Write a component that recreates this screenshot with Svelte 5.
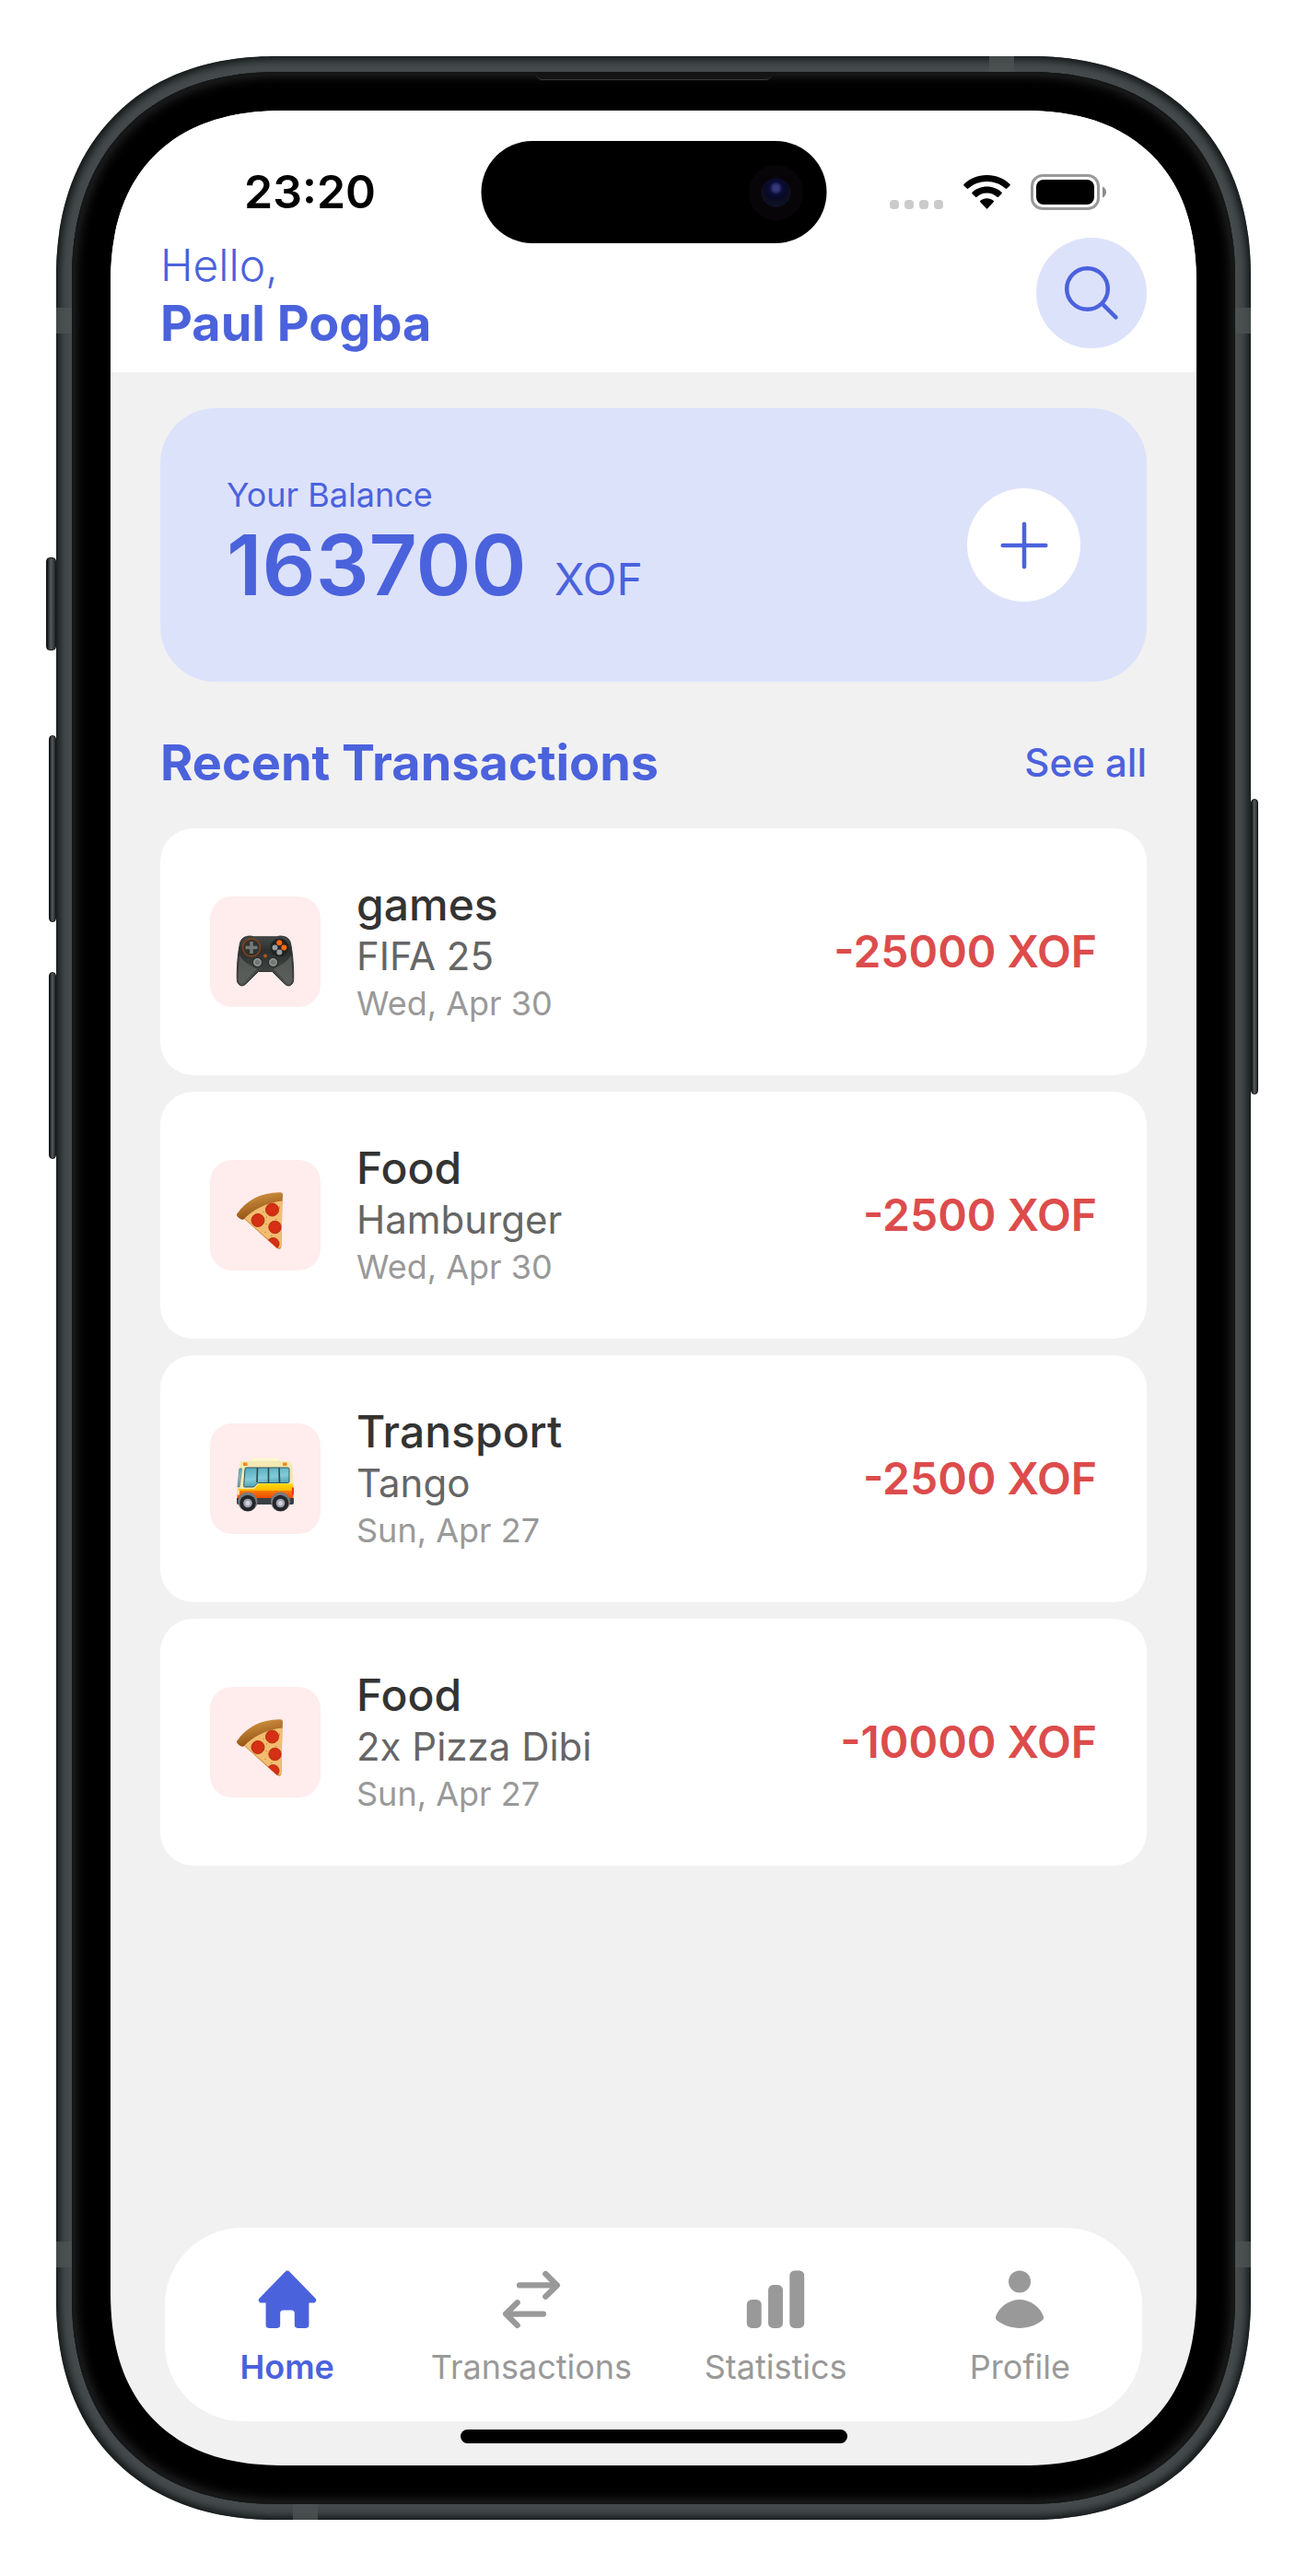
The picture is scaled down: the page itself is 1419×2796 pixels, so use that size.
<script>
  const transactions = [
    { icon: 'gamepad', category: 'games', note: 'FIFA 25', date: 'Wed, Apr 30', amount: '-25000 XOF' },
    { icon: 'pizza', category: 'Food', note: 'Hamburger', date: 'Wed, Apr 30', amount: '-2500 XOF' },
    { icon: 'bus', category: 'Transport', note: 'Tango', date: 'Sun, Apr 27', amount: '-2500 XOF' },
    { icon: 'pizza', category: 'Food', note: '2x Pizza Dibi', date: 'Sun, Apr 27', amount: '-10000 XOF' },
  ];
  const tabs = [
    { id: 'home', label: 'Home' },
    { id: 'transactions', label: 'Transactions' },
    { id: 'statistics', label: 'Statistics' },
    { id: 'profile', label: 'Profile' },
  ];
  let active = $state('home');
</script>

<div class="stage">
  <div class="phone">
    <i class="key mute"></i>
    <i class="key up"></i>
    <i class="key down"></i>
    <i class="key power"></i>
    <i class="band lt"></i>
    <i class="band lb"></i>
    <i class="band rt"></i>
    <i class="band rb"></i>
    <i class="band top"></i>
    <i class="band bottom"></i>
    <div class="bezel">
      <i class="earpiece"></i>
      <div class="screen">
        <header>
          <div class="status">
            <time>23:20</time>
            <div class="signals">
              <span class="dots"><i></i><i></i><i></i><i></i></span>
              <svg class="wifi" viewBox="0 0 51 37" aria-hidden="true">
                <path d="M25.5 0C35.5 0 44.2 3.8 50.5 9.9c.5.5.5 1 0 1.500l-3.200 3.200c-.5.5-1.100.5-1.600 0C40.400 9.700 33.300 6.900 25.500 6.900S10.600 9.700 5.300 14.600c-.5.5-1.100.5-1.600 0L.5 11.400c-.5-.5-.5-1 0-1.500C6.800 3.800 15.500 0 25.500 0Z" />
                <path d="M25.5 12.600c6.200 0 11.800 2.300 16 6.100.5.5.5 1 0 1.500l-3.500 3.500c-.5.5-1.100.5-1.600 0-2.900-2.600-6.700-4.200-10.900-4.200s-8 1.600-10.900 4.200c-.5.5-1.100.5-1.600 0l-3.500-3.500c-.5-.5-.5-1 0-1.500 4.200-3.800 9.800-6.100 16-6.100Z" />
                <path d="M25.500 25.200c2.700 0 5.200 1 7.100 2.500.5.5.6 1 .1 1.500l-6.500 7.100c-.4.500-1 .5-1.400 0l-6.500-7.100c-.5-.5-.4-1 .1-1.500 1.900-1.500 4.400-2.500 7.100-2.500Z" />
              </svg>
              <svg class="battery" viewBox="0 0 83 39" aria-hidden="true">
                <rect x="1.500" y="1.500" width="72" height="36" rx="11.500" fill="none" stroke="#999" stroke-width="3" />
                <rect x="6" y="6" width="63" height="27" rx="8" />
                <path d="M78 13.500c2.500 1 4 3.400 4 6s-1.500 5-4 6Z" fill="#8c8c8c" />
              </svg>
            </div>
            <div class="island"><i></i></div>
          </div>
          <div class="greeting">
            <div>
              <p class="hello">Hello,</p>
              <h1>Paul Pogba</h1>
            </div>
            <button class="round search" aria-label="Search">
              <svg viewBox="0 0 72 72"><circle cx="31.500" cy="31.500" r="22.300" /><path d="M47.500 47.500 62.500 62.500" /></svg>
            </button>
          </div>
        </header>

        <main>
          <section class="balance">
            <div>
              <p class="caption">Your Balance</p>
              <p class="total"><strong>163700</strong><span>XOF</span></p>
            </div>
            <button class="round add" aria-label="Add transaction">
              <svg viewBox="0 0 72 72"><path d="M36 12.700V59.300M12.700 36H59.300" /></svg>
            </button>
          </section>

          <div class="heading">
            <h2>Recent Transactions</h2>
            <a href="#all">See all</a>
          </div>

          <ul>
            {#each transactions as t}
              <li>
                <span class="tile">
                  <svg viewBox="0 0 120 120" aria-hidden="true">
                    {#if t.icon === 'gamepad'}
                      <defs>
                        <linearGradient id="pad" x1="0" y1="0" x2="0" y2="1">
                          <stop offset="0" stop-color="#454b48" /><stop offset=".3" stop-color="#2c2f2e" /><stop offset="1" stop-color="#4e514f" />
                        </linearGradient>
                      </defs>
                      <path fill="url(#pad)" stroke="#2f3231" stroke-width="1" d="M37 44.500c3-1.600 8-2 10-.7h26c2-1.300 7-.9 10 .7 3.500 2 4.500 5 5 9 1.700 9 3 24 2.700 36 0 7-5.500 9.500-9.500 5.500L67.500 81.500h-15L38.800 95c-4 4-9.500 1.500-9.500-5.500-.3-12 1-27 2.700-36 .5-4 1.500-7 5-9Z" />
                      <path fill="#636663" opacity=".7" d="M32 64c5 8 12 11 19 15L37 93.500c-3 2.500-6 1-6-4 0-8 0-17 1-25.500Zm56 0c-5 8-12 11-19 15l14 14.500c3 2.500 6 1 6-4 0-8 0-17-1-25.500Z" />
                      <circle cx="45" cy="55.500" r="9.500" fill="#303331" stroke="#8a4218" stroke-width="1.500" />
                      <path fill="#747976" d="M43.200 49h3.600v4.700h4.700v3.600h-4.700V62h-3.600v-4.700h-4.700v-3.600h4.700Z" />
                      <circle cx="75.500" cy="55.500" r="10" fill="#202322" />
                      <circle cx="75.300" cy="50.300" r="3" fill="#ff6a13" /><circle cx="80.300" cy="55.500" r="3" fill="#ff6a13" />
                      <circle cx="70.500" cy="55.500" r="3" fill="#9a9ea0" /><circle cx="75.300" cy="60.500" r="3" fill="#9a9ea0" />
                      <circle cx="60" cy="64.500" r="2" fill="#b3541d" />
                      <circle cx="51.500" cy="71.500" r="5" fill="#8f9493" stroke="#1d1f1f" /><circle cx="68.500" cy="71.500" r="5" fill="#8f9493" stroke="#1d1f1f" />
                      <circle cx="51.500" cy="71.500" r="2.800" fill="#737877" /><circle cx="68.500" cy="71.500" r="2.800" fill="#737877" />
                    {:else if t.icon === 'pizza'}
                      <defs>
                        <linearGradient id="crust" x1="0" y1="0" x2=".4" y2="1">
                          <stop offset="0" stop-color="#dda048" /><stop offset="1" stop-color="#8e4d12" />
                        </linearGradient>
                        <clipPath id="slice"><path d="M37 63C47 53 63 45 78.300 43.500L77.500 93c-.3 3.500-2 4.500-5 2.500Z" /></clipPath>
                      </defs>
                      <path fill="#c98336" d="M35 62 71 94.500c4 3 6 3 6.500-1l1-50Z" />
                      <path fill="#f2bd71" d="M37 63C47 53 63 45 78.300 43.500L77.500 92c-.3 3.500-2 4.500-5 2.500Z" />
                      <g clip-path="url(#slice)" fill="#d52f15" stroke="#b2340d" stroke-width="1">
                        <circle cx="67.500" cy="54" r="7" /><circle cx="52" cy="65.500" r="7" /><circle cx="70.500" cy="73" r="6.700" /><circle cx="68.500" cy="91" r="6.500" />
                      </g>
                      <path fill="#e98c3c" d="M57 56h2v1h-2Zm3 13h2v1h-2Zm-1 9h2v1h-2Zm7 4h2v1h-2Zm-5-21h1v2h-1Zm10 3h2v1h-2Zm4-14h1v3h-1Z" />
                      <path fill="url(#crust)" d="M29 59C39 44 56 35 76 35.300c2 0 3 .7 3 2.700l-.3 6.500C62 46 46 54 36.500 64.500c-1.500 1.500-8.500-3-7.500-5.500Z" />
                    {:else}
                      <defs>
                        <linearGradient id="glass" x1="0" y1="0" x2=".3" y2="1">
                          <stop offset="0" stop-color="#4fa9bc" /><stop offset=".6" stop-color="#83cbd7" /><stop offset="1" stop-color="#4a9fb3" />
                        </linearGradient>
                        <linearGradient id="paint" x1="0" y1="0" x2="0" y2="1">
                          <stop offset="0" stop-color="#ffd800" /><stop offset=".45" stop-color="#ffb900" /><stop offset=".5" stop-color="#ff7a00" /><stop offset="1" stop-color="#ec4a07" />
                        </linearGradient>
                      </defs>
                      <path fill="#f3e9b4" d="M46 37.500h27l3 3.500h9c3 1 4 3 4.500 7L91 72H30l2-28c0-2 1-3 3-3h8Z" />
                      <path fill="#fff9d8" d="M46 37.500h27l2.500 3H43.500Z" />
                      <path fill="url(#glass)" stroke="#34545b" stroke-width="1" d="M39.500 48h45c1 0 1.500.5 1.500 1.500V63c0 1-.5 1.500-1.500 1.500H52L47.500 69H38c-1 0-1.500-.5-1.300-1.500L38 49.500c0-1 .5-1.500 1.500-1.500Z" />
                      <path fill="url(#glass)" stroke="#5b8289" stroke-width=".8" d="M32 49h2.500L32 69h-2Z" />
                      <path stroke="#2f464c" stroke-width="1.600" d="M51.500 48 51 64M63.500 48v16M75 48l.5 16" />
                      <path fill="url(#paint)" d="M30 71h18l5-5.500h37L90.500 81H29.500Z" />
                      <path fill="#3b4044" d="M29 81h62v5c0 1.500-1 2-2 2H31c-1.500 0-2-1-2-2Z" />
                      <path fill="#ec3226" d="M89 69.500h2v8h-2Z" /><path fill="#ffe0c0" d="M29.500 72.500h2.500v5h-2.500Z" />
                      <path fill="#f08a15" d="M36 42.500h4.500v3.500H36Zm43 0h4.500v3.500H79Z" />
                      <circle cx="41" cy="85" r="10.500" fill="#777b80" /><circle cx="76.500" cy="85" r="10.500" fill="#777b80" />
                      <circle cx="41" cy="86.500" r="8.800" fill="#24262a" /><circle cx="76.500" cy="86.500" r="8.800" fill="#24262a" />
                      <circle cx="41" cy="86.500" r="4.800" fill="#9fa3ad" /><circle cx="76.500" cy="86.500" r="4.800" fill="#9fa3ad" />
                      <circle cx="41" cy="86.500" r="2.500" fill="#d0d3da" /><circle cx="76.500" cy="86.500" r="2.500" fill="#d0d3da" />
                    {/if}
                  </svg>
                </span>
                <div class="details">
                  <h3>{t.category}</h3>
                  <p class="note">{t.note}</p>
                  <p class="date">{t.date}</p>
                </div>
                <span class="amount">{t.amount}</span>
              </li>
            {/each}
          </ul>
        </main>

        <nav>
          {#each tabs as tab}
            <a href={'#' + tab.id} class:active={active === tab.id} onclick={() => (active = tab.id)}>
              <svg viewBox="0 0 24 24" aria-hidden="true">
                {#if tab.id === 'home'}
                  <path d="M11.300 1.800a.9.900 0 0 1 1.400 0l9.500 9.800c.5.700.1 1.600-.8 1.600h-1.600v8c0 .7-.4 1.100-1.100 1.100h-3c-.7 0-1.100-.4-1.100-1.100v-4.300c0-.7-.4-1.100-1.100-1.100h-3c-.7 0-1.100.4-1.100 1.100v4.300c0 .7-.4 1.100-1.100 1.100h-3c-.7 0-1.100-.4-1.100-1.100v-8H2.600c-.9 0-1.300-.9-.8-1.600Z" />
                {:else if tab.id === 'transactions'}
                  <path class="line" d="M7.700 6.800H21M17.100 2.700 21.300 6.800 17.100 10.900M16.300 17.200H3M6.900 13.100 2.700 17.200 6.900 21.300" />
                {:else if tab.id === 'statistics'}
                  <rect x="1.600" y="12" width="5.300" height="10.300" rx="1.800" />
                  <rect x="9.350" y="6.700" width="5.300" height="15.600" rx="1.800" />
                  <rect x="17.100" y="1.500" width="5.300" height="20.800" rx="1.800" />
                {:else}
                  <circle cx="12" cy="5.500" r="4" />
                  <path d="M12 12c3.700 0 7.500 2.700 8.600 6 .2.800 0 1.200-.6 1.700-2.200 1.700-5 2.600-8 2.600s-5.800-.9-8-2.600c-.6-.5-.8-.9-.6-1.700 1.100-3.300 4.900-6 8.600-6Z" />
                {/if}
              </svg>
              <span>{tab.label}</span>
            </a>
          {/each}
        </nav>
        <div class="indicator"></div>
      </div>
    </div>
  </div>
</div>

<style>
  :global(body) { margin: 0; background: #fff; }
  * { box-sizing: border-box; }
  p, h1, h2, h3, ul { margin: 0; padding: 0; }
  .stage {
    display: flex;
    min-height: 100vh;
    padding: 61px;
    font-family: Inter, "Liberation Sans", sans-serif;
    color: #4b62dd;
  }
  .phone {
    position: relative;
    flex: 1;
    display: flex;
    padding: 17px;
    border-radius: 240px;
    corner-shape: superellipse(1.16);
    background: #454b4c;
    box-shadow: inset 0 0 9px 4px #131718;
  }
  .bezel {
    position: relative;
    flex: 1;
    display: flex;
    padding: 42px;
    border-radius: 225px;
    corner-shape: superellipse(1.17);
    background: #000;
    box-shadow: inset 0 0 0 2px #151717, inset 0 0 14px 3px #2c2c2c;
  }
  .screen {
    position: relative;
    flex: 1;
    display: flex;
    flex-direction: column;
    min-width: 0;
    border-radius: 190px;
    corner-shape: superellipse(1.24);
    background: #f1f1f1;
    overflow: hidden;
  }
  .key { position: absolute; width: 11px; border-radius: 4px; background: linear-gradient(90deg, #0d1011, #555b5c 45%, #24292a); border: 1px solid #151819; }
  .mute { left: -11px; top: 544px; height: 101px; }
  .up { left: -8px; top: 737px; height: 203px; width: 8px; }
  .down { left: -8px; top: 994px; height: 203px; width: 8px; }
  .power { right: -8px; top: 806px; height: 321px; width: 8px; }
  .band { position: absolute; background: #4c5253; opacity: .8; }
  .lt, .lb, .rt, .rb { width: 17px; height: 28px; }
  .lt, .lb { left: 0; }
  .rt, .rb { right: 0; }
  .lt, .rt { top: 273px; }
  .lb, .rb { bottom: 274px; }
  .top, .bottom { width: 27px; height: 17px; }
  .top { top: 0; right: 257px; }
  .bottom { bottom: 0; left: 257px; }
  .earpiece { position: absolute; top: 0; left: 50%; width: 256px; height: 9px; transform: translateX(-50%); border-radius: 0 0 7px 7px; background: #141414; border-bottom: 1px solid #3a3a3a; }

  header { background: #fff; padding-bottom: 26px; }
  .status {
    position: relative;
    display: flex;
    align-items: center;
    justify-content: space-between;
    height: 138px;
    padding: 57px 97px 19px 145px;
    color: #000;
  }
  time { font-size: 50px; line-height: 62px; font-weight: 600; }
  .signals { display: flex; align-items: center; gap: 22px; }
  .dots { display: flex; gap: 6px; align-self: flex-end; padding-bottom: 1px; }
  .dots i { width: 10px; height: 10px; border-radius: 4px; background: #cbcbcb; }
  .wifi { width: 51px; height: 37px; }
  .battery { width: 83px; height: 39px; }
  .island {
    position: absolute;
    top: 33px;
    left: 50%;
    width: 375px;
    height: 111px;
    transform: translateX(-50%);
    border-radius: 56px;
    background: #000;
  }
  .island i {
    position: absolute;
    top: 40px;
    right: 39px;
    width: 32px;
    height: 32px;
    border-radius: 50%;
    background: radial-gradient(circle at 50% 35%, #34387c 0 3px, #0c0d38 7px, #080925 11px, #0d1020 16px);
    box-shadow: 0 0 0 14px #080508;
  }
  .greeting { display: flex; justify-content: space-between; align-items: flex-start; height: 120px; padding: 0 54px; }
  .hello { font-size: 48px; line-height: 60px; font-weight: 300; }
  h1, h2 { font-size: 54px; line-height: 66px; font-weight: 700; }
  .round {
    display: grid;
    place-items: center;
    flex: none;
    padding: 0;
    border: 0;
    border-radius: 50%;
  }
  .round svg { width: 72px; height: 72px; fill: none; stroke: #4b62dd; stroke-width: 4.5; stroke-linecap: round; }
  .search { width: 120px; height: 120px; background: #dde2fb; }
  .add { width: 123px; height: 123px; background: #fff; }

  main { flex: 1; padding: 39px 54px; }
  .balance {
    display: flex;
    justify-content: space-between;
    align-items: center;
    padding: 72px;
    border-radius: 60px;
    background: #dde2fb;
  }
  .caption { font-size: 36px; line-height: 44px; font-weight: 400; }
  .total { display: flex; align-items: baseline; gap: 30px; line-height: 58px; }
  .total strong { font-size: 91px; line-height: 109px; font-weight: 600; }
  .total span { font-size: 48px; font-weight: 400; }
  .heading { display: flex; justify-content: space-between; align-items: center; padding: 55px 0 38px; }
  a { color: inherit; text-decoration: none; }
  .heading a { font-size: 42px; line-height: 52px; font-weight: 500; }
  ul { display: flex; flex-direction: column; gap: 18px; list-style: none; }
  li { display: flex; align-items: center; padding: 52px 54px; border-radius: 36px; background: #fff; }
  .tile { flex: none; width: 120px; height: 120px; border-radius: 24px; background: #ffecec; }
  .tile svg { display: block; width: 120px; height: 120px; }
  .details { flex: 1; padding-left: 39px; }
  h3 { font-size: 48px; line-height: 62px; font-weight: 500; color: #333; }
  .note { font-size: 42px; line-height: 50px; color: #666; }
  .date { font-size: 36px; line-height: 52px; color: #999; }
  .amount { font-size: 48px; line-height: 58px; font-weight: 600; color: #dc4c4c; }

  nav {
    display: flex;
    margin: 0 59px;
    padding: 42px 0 37px;
    border-radius: 84px;
    background: #fff;
  }
  nav a { flex: 1 1 0; display: flex; flex-direction: column; align-items: center; gap: 15px; color: #999; font-size: 36px; line-height: 44px; }
  nav svg { width: 72px; height: 72px; fill: currentColor; }
  .line { fill: none; stroke: currentColor; stroke-width: 2.1; stroke-linecap: round; stroke-linejoin: round; }
  .active { color: #4b62dd; font-weight: 600; }
  .indicator { width: 420px; height: 15px; margin: 9px auto 24px; border-radius: 8px; background: #000; }
</style>
